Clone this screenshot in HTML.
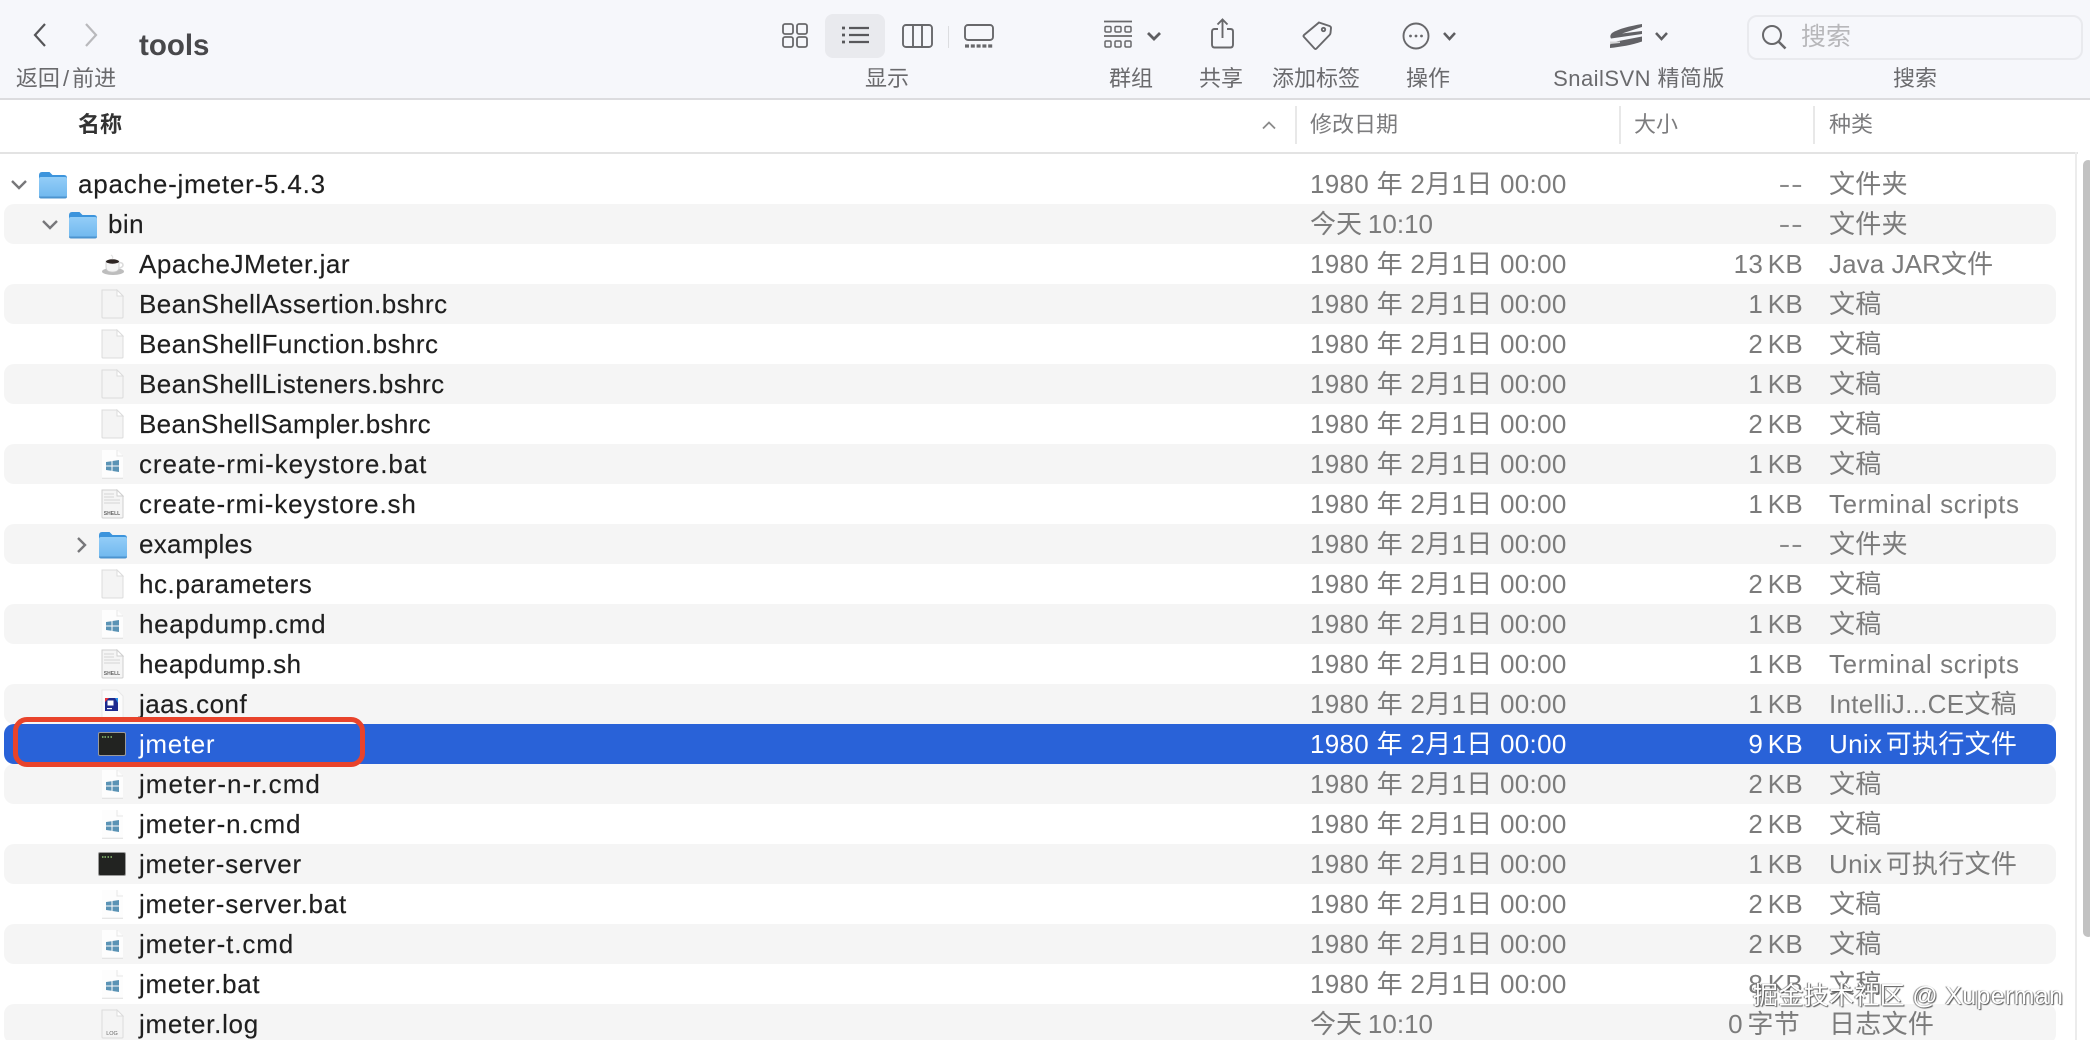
<!DOCTYPE html>
<html lang="zh"><head><meta charset="utf-8"><title>tools</title>
<style>
html,body{margin:0;padding:0;background:#fff}
#p{position:relative;width:2090px;height:1040px;overflow:hidden;background:#fff;font-family:"Liberation Sans","Noto Sans CJK SC",sans-serif;filter:blur(.3px)}
#tb{position:absolute;left:0;top:0;width:2090px;height:98px;background:#f6f7fb;border-bottom:2px solid #dcdcdf}
.l{position:absolute;top:65px;height:28px;line-height:28px;font-size:22px;color:#6a6a6d;transform:translateX(-50%);white-space:nowrap}
.h{position:absolute;top:109px;height:32px;line-height:32px;font-size:22px;color:#7c7c7e;white-space:nowrap}
.sep{position:absolute;top:106px;width:2px;height:38px;background:#e8e8e8}
.ic{position:absolute;overflow:visible}
.st{position:absolute;left:4px;width:2052px;height:40px;border-radius:10px;background:#f5f5f5}
.r{position:absolute;left:0;width:2060px;height:40px;line-height:40px;font-size:26px;white-space:nowrap}
.r span{position:absolute;top:0}
.n{color:#1f1f1f;letter-spacing:.45px;-webkit-text-stroke:.15px #1f1f1f}
.d{left:1310px;color:#7b7b7b;letter-spacing:.3px}
.s{right:257px;color:#7b7b7b;word-spacing:-3px;letter-spacing:.3px}
.dd{right:257px;letter-spacing:.5px;color:#8a8a8a;transform:scaleX(1.35);transform-origin:right center}
.dt{letter-spacing:0;word-spacing:-1.3px}
.t{word-spacing:-4px}
.k{left:1829px;color:#7b7b7b;letter-spacing:.3px}
.sel span{color:#fff;-webkit-text-stroke:0}
.r svg{position:absolute}
.mini{font-family:"Liberation Sans",sans-serif;font-weight:700}
</style></head><body><div id="p">

<svg width="0" height="0" style="position:absolute"><defs>
<linearGradient id="fg" x1="0" y1="0" x2="0" y2="1"><stop offset="0" stop-color="#93cdf7"/><stop offset="1" stop-color="#6fb7ee"/></linearGradient>
<symbol id="folder" viewBox="0 0 30 28"><path d="M1 4.500Q1 1 4 1h7.500l3 3H26q3 0 3 3v4H1z" fill="#3c94dc"/><rect x="1" y="6" width="28" height="21" rx="2" fill="url(#fg)"/><path d="M1 25.500h28V25.600q0 1.900-2 1.900H3q-2 0-2-1.900z" fill="#4c94cf"/></symbol>
<symbol id="doc" viewBox="0 0 24 30"><path d="M2 1h15l6 6v21q0 1-1 1H3q-1 0-1-1z" fill="#f4f4f4" stroke="#dcdcdc"/><path d="M17 1v6h6z" fill="#fff" stroke="#dcdcdc"/></symbol>
<symbol id="win" viewBox="0 0 24 30"><path d="M2 1h15l6 6v21q0 1-1 1H3q-1 0-1-1z" fill="#fdfdfd"/><path d="M2 29.300h21" stroke="#dedede"/><path d="M17 1v6h6" fill="none" stroke="#e6e6e6"/><path d="M6 13l5.500-.8v4.300H6zM12.500 12l6.500-1v5.500h-6.500zM6 17.500h5.500v4.300L6 21zM12.500 17.500H19V23l-6.500-1z" fill="#5a93b5"/></symbol>
<symbol id="shell" viewBox="0 0 24 30"><path d="M2 1h15l6 6v21q0 1-1 1H3q-1 0-1-1z" fill="#f5f5f5" stroke="#cfcfcf"/><path d="M17 1v6h6z" fill="#fff" stroke="#cfcfcf"/><path d="M4 5h10M4 8h10M4 11h16M4 14h16" stroke="#dcdcdc" stroke-width="1.300"/></symbol>
<symbol id="term" viewBox="0 0 28 24"><rect x=".5" y=".5" width="27" height="23" rx="1.500" fill="#222321" stroke="#9a9a9a"/><path d="M4 5h1.500M6.500 5H8M9.500 5H11M12.500 5H14" stroke="#8cc274" stroke-width="1.600"/></symbol>
</defs></svg>

<div id="tb"></div>
<!-- nav -->
<svg class="ic" style="left:32px;top:22px" width="16" height="26" viewBox="0 0 16 26"><path d="M13 2L3 13l10 11" fill="none" stroke="#555558" stroke-width="2.200"/></svg>
<svg class="ic" style="left:83px;top:22px" width="16" height="26" viewBox="0 0 16 26"><path d="M3 2l10 11L3 24" fill="none" stroke="#b9b9bc" stroke-width="2.200"/></svg>
<div style="position:absolute;left:139px;top:28px;height:36px;line-height:36px;font-size:29.500px;font-weight:700;color:#48484b">tools</div>
<div class="l" style="left:66px">返回<span style="margin:0 3px">/</span>前进</div>

<!-- view -->
<svg class="ic" style="left:782px;top:23px" width="26" height="25" viewBox="0 0 26 25" fill="none" stroke="#68686b" stroke-width="1.800"><rect x="1" y="1" width="10" height="10" rx="2"/><rect x="15" y="1" width="10" height="10" rx="2"/><rect x="1" y="14" width="10" height="10" rx="2"/><rect x="15" y="14" width="10" height="10" rx="2"/></svg>
<div style="position:absolute;left:825px;top:14px;width:60px;height:44px;border-radius:8px;background:#e9eaee"></div>
<svg class="ic" style="left:842px;top:25px" width="27" height="20" viewBox="0 0 27 20" fill="none" stroke="#58585b" stroke-width="2.200"><path d="M7 3h20M7 10h20M7 17h20"/><path d="M0 3h3M0 10h3M0 17h3" stroke-width="2.800"/></svg>
<svg class="ic" style="left:902px;top:24px" width="31" height="24" viewBox="0 0 31 24" fill="none" stroke="#68686b" stroke-width="1.900"><rect x="1" y="1" width="29" height="22" rx="3"/><path d="M11 1v22M20 1v22"/></svg>
<div style="position:absolute;left:948px;top:26px;width:1px;height:22px;background:#dcdde0"></div>
<svg class="ic" style="left:964px;top:24px" width="30" height="24" viewBox="0 0 30 24" fill="none" stroke="#68686b" stroke-width="1.900"><rect x="1" y="1" width="28" height="15" rx="3"/><path d="M1 22h28" stroke-width="3.200" stroke-dasharray="4 1.800"/></svg>
<div class="l" style="left:887px">显示</div>

<!-- group -->
<svg class="ic" style="left:1104px;top:20px" width="28" height="29" viewBox="0 0 28 29" fill="none" stroke="#68686b" stroke-width="1.500"><path d="M0 1.500h28M0 16h28" stroke-width="1.700"/><rect x="1" y="6.500" width="6" height="5.500" rx="1.200"/><rect x="11" y="6.500" width="6" height="5.500" rx="1.200"/><rect x="21" y="6.500" width="6" height="5.500" rx="1.200"/><rect x="1" y="21" width="6" height="6" rx="1.200"/><rect x="11" y="21" width="6" height="6" rx="1.200"/><rect x="21" y="21" width="6" height="6" rx="1.200"/></svg>
<svg class="ic" style="left:1146px;top:31px" width="16" height="11" viewBox="0 0 16 11"><path d="M2 2l6 6 6-6" fill="none" stroke="#5e5e61" stroke-width="2.800"/></svg>
<div class="l" style="left:1131px">群组</div>
<!-- share -->
<svg class="ic" style="left:1211px;top:18px" width="23" height="31" viewBox="0 0 23 31" fill="none" stroke="#68686b" stroke-width="1.900"><path d="M7 11H3.500Q1 11 1 13.500v13Q1 29.500 3.500 29.500h16q2.500 0 2.500-3v-13q0-2.500-2.500-2.500H16"/><path d="M11.500 20V2M6.500 6.500l5-5 5 5"/></svg>
<div class="l" style="left:1221px">共享</div>
<!-- tag -->
<svg class="ic" style="left:1302px;top:21px" width="31" height="30" viewBox="0 0 31 30" fill="none" stroke="#68686b" stroke-width="1.900"><path d="M17 1.500l10.500 3.500q1.500.5 1.500 2l-.5 5q-.1 1-1 2L14.500 27.500q-1 1-2 0L2 16q-1-1 0-2z"/><circle cx="21.500" cy="8.500" r="1.700"/></svg>
<div class="l" style="left:1316px">添加标签</div>
<!-- action -->
<svg class="ic" style="left:1402px;top:22px" width="28" height="28" viewBox="0 0 28 28" fill="none" stroke="#68686b" stroke-width="1.900"><circle cx="14" cy="14" r="12.500"/><circle cx="8.500" cy="14" r="1.400" fill="#68686b" stroke="none"/><circle cx="14" cy="14" r="1.400" fill="#68686b" stroke="none"/><circle cx="19.500" cy="14" r="1.400" fill="#68686b" stroke="none"/></svg>
<svg class="ic" style="left:1442px;top:31px" width="15" height="11" viewBox="0 0 15 11"><path d="M2 2l5.500 6L13 2" fill="none" stroke="#5e5e61" stroke-width="2.500"/></svg>
<div class="l" style="left:1428px">操作</div>
<!-- svn -->
<svg class="ic" style="left:1610px;top:23px" width="33" height="26" viewBox="0 0 33 26"><path d="M32 1C20 3 8 6 2 10 0 12 0 14 1 15.500L32 11V8L12 10.500 32 4z" fill="#626266"/><path d="M1 19.500L32 13.500V18.500C22 22 10 24 0 25V22z" fill="#626266"/><path d="M0 18.500h10v1.500l-10 1z" fill="#d6d6d8"/></svg>
<svg class="ic" style="left:1654px;top:31px" width="15" height="11" viewBox="0 0 15 11"><path d="M2 2l5.500 6L13 2" fill="none" stroke="#5e5e61" stroke-width="2.500"/></svg>
<div class="l" style="left:1639px;letter-spacing:.45px">SnailSVN 精简版</div>
<!-- search -->
<div style="position:absolute;left:1747px;top:15px;width:332px;height:41px;border:2px solid #e9eaee;border-radius:10px"></div>
<svg class="ic" style="left:1761px;top:24px" width="27" height="27" viewBox="0 0 27 27" fill="none" stroke="#68686b" stroke-width="2"><circle cx="11" cy="11" r="9"/><path d="M17.500 17.500l7 7" stroke-width="2.600"/></svg>
<div style="position:absolute;left:1801px;top:21px;height:32px;line-height:32px;font-size:25px;color:#b7b7ba">搜索</div>
<div class="l" style="left:1915px">搜索</div>

<!-- header -->
<div class="h" style="left:78px;font-weight:700;color:#333">名称</div>
<svg class="ic" style="left:1261px;top:120px" width="16" height="10" viewBox="0 0 16 10"><path d="M2 8.500l6-6 6 6" fill="none" stroke="#8a8a8a" stroke-width="1.800"/></svg>
<div class="sep" style="left:1295px"></div><div class="h" style="left:1310px">修改日期</div>
<div class="sep" style="left:1619px"></div><div class="h" style="left:1634px">大小</div>
<div class="sep" style="left:1813px"></div><div class="h" style="left:1829px">种类</div>
<div style="position:absolute;left:0;top:152px;width:2078px;height:2px;background:#e3e3e3"></div>

<!-- stripes -->
<div class="st" style="top:204px"></div>
<div class="st" style="top:284px"></div>
<div class="st" style="top:364px"></div>
<div class="st" style="top:444px"></div>
<div class="st" style="top:524px"></div>
<div class="st" style="top:604px"></div>
<div class="st" style="top:684px"></div>
<div class="st" style="top:724px;background:#2962d8"></div>
<div class="st" style="top:764px"></div>
<div class="st" style="top:844px"></div>
<div class="st" style="top:924px"></div>
<div class="st" style="top:1004px"></div>

<!-- rows -->
<div class="r" style="top:164px"><svg style="left:9px;top:15px" width="20" height="12" viewBox="0 0 20 12"><path d="M3 2l7 7 7-7" fill="none" stroke="#77777a" stroke-width="2.400"/></svg><svg style="left:38px;top:7px" width="30" height="28"><use href="#folder"/></svg><span class="n" style="left:78px;letter-spacing:.8px">apache-jmeter-5.4.3</span><span class="d">1980 年 2月1日 00:00</span><span class="s dd">--</span><span class="k">文件夹</span></div>
<div class="r" style="top:204px"><svg style="left:40px;top:15px" width="20" height="12" viewBox="0 0 20 12"><path d="M3 2l7 7 7-7" fill="none" stroke="#77777a" stroke-width="2.400"/></svg><svg style="left:68px;top:7px" width="30" height="28"><use href="#folder"/></svg><span class="n" style="left:108px">bin</span><span class="d dt">今天 10:10</span><span class="s dd">--</span><span class="k">文件夹</span></div>
<div class="r" style="top:244px"><svg style="left:101px;top:10px" width="24" height="22" viewBox="0 0 24 22"><ellipse cx="12" cy="17.500" rx="11" ry="3.500" fill="#bdbdbd"/><path d="M5 7h13v6q0 5-6.500 5T5 13z" fill="#f4f4f4" stroke="#c9c9c9" stroke-width=".8"/><path d="M18 8.500q4 0 4 2.500t-5 3.500" fill="none" stroke="#dcdcdc" stroke-width="1.600"/><ellipse cx="11.500" cy="7.500" rx="6.500" ry="2.200" fill="#2c2422"/><path d="M10 1q3 2 1 4" fill="none" stroke="#e2e2e2" stroke-width="1.200"/></svg><span class="n" style="left:139px;letter-spacing:.55px">ApacheJMeter.jar</span><span class="d">1980 年 2月1日 00:00</span><span class="s">13 KB</span><span class="k" style="letter-spacing:.1px">Java JAR文件</span></div>
<div class="r" style="top:284px"><svg style="left:100px;top:5px" width="24" height="30"><use href="#doc"/></svg><span class="n" style="left:139px">BeanShellAssertion.bshrc</span><span class="d">1980 年 2月1日 00:00</span><span class="s">1 KB</span><span class="k">文稿</span></div>
<div class="r" style="top:324px"><svg style="left:100px;top:5px" width="24" height="30"><use href="#doc"/></svg><span class="n" style="left:139px">BeanShellFunction.bshrc</span><span class="d">1980 年 2月1日 00:00</span><span class="s">2 KB</span><span class="k">文稿</span></div>
<div class="r" style="top:364px"><svg style="left:100px;top:5px" width="24" height="30"><use href="#doc"/></svg><span class="n" style="left:139px">BeanShellListeners.bshrc</span><span class="d">1980 年 2月1日 00:00</span><span class="s">1 KB</span><span class="k">文稿</span></div>
<div class="r" style="top:404px"><svg style="left:100px;top:5px" width="24" height="30"><use href="#doc"/></svg><span class="n" style="left:139px;letter-spacing:.33px">BeanShellSampler.bshrc</span><span class="d">1980 年 2月1日 00:00</span><span class="s">2 KB</span><span class="k">文稿</span></div>
<div class="r" style="top:444px"><svg style="left:100px;top:5px" width="24" height="30"><use href="#win"/></svg><span class="n" style="left:139px;letter-spacing:.91px">create-rmi-keystore.bat</span><span class="d">1980 年 2月1日 00:00</span><span class="s">1 KB</span><span class="k">文稿</span></div>
<div class="r" style="top:484px"><svg style="left:100px;top:5px" width="24" height="30"><use href="#shell"/><text x="12" y="26" text-anchor="middle" font-size="5" class="mini" fill="#666">SHELL</text></svg><span class="n" style="left:139px;letter-spacing:.87px">create-rmi-keystore.sh</span><span class="d">1980 年 2月1日 00:00</span><span class="s">1 KB</span><span class="k" style="letter-spacing:.63px">Terminal scripts</span></div>
<div class="r" style="top:524px"><svg style="left:76px;top:12px" width="12" height="18" viewBox="0 0 12 18"><path d="M2 2l7 7-7 7" fill="none" stroke="#77777a" stroke-width="2.400"/></svg><svg style="left:98px;top:7px" width="30" height="28"><use href="#folder"/></svg><span class="n" style="left:139px;letter-spacing:.3px">examples</span><span class="d">1980 年 2月1日 00:00</span><span class="s dd">--</span><span class="k">文件夹</span></div>
<div class="r" style="top:564px"><svg style="left:100px;top:5px" width="24" height="30"><use href="#doc"/></svg><span class="n" style="left:139px;letter-spacing:.55px">hc.parameters</span><span class="d">1980 年 2月1日 00:00</span><span class="s">2 KB</span><span class="k">文稿</span></div>
<div class="r" style="top:604px"><svg style="left:100px;top:5px" width="24" height="30"><use href="#win"/></svg><span class="n" style="left:139px;letter-spacing:.67px">heapdump.cmd</span><span class="d">1980 年 2月1日 00:00</span><span class="s">1 KB</span><span class="k">文稿</span></div>
<div class="r" style="top:644px"><svg style="left:100px;top:5px" width="24" height="30"><use href="#shell"/><text x="12" y="26" text-anchor="middle" font-size="5" class="mini" fill="#666">SHELL</text></svg><span class="n" style="left:139px">heapdump.sh</span><span class="d">1980 年 2月1日 00:00</span><span class="s">1 KB</span><span class="k" style="letter-spacing:.63px">Terminal scripts</span></div>
<div class="r" style="top:684px"><svg style="left:100px;top:5px" width="24" height="30" viewBox="0 0 24 30"><path d="M2 1h15l6 6v21q0 1-1 1H3q-1 0-1-1z" fill="#fbfbfb" stroke="#e8e8e8"/><rect x="5" y="9" width="13" height="13" fill="#1d2a8f"/><path d="M5 9h4l-4 4z" fill="#e8333d"/><path d="M18 9v5l-3-5z" fill="#2b8fe6"/><rect x="7.500" y="11.500" width="6" height="5" fill="#fff"/><rect x="7" y="19" width="5" height="1.200" fill="#fff"/></svg><span class="n" style="left:139px">jaas.conf</span><span class="d">1980 年 2月1日 00:00</span><span class="s">1 KB</span><span class="k">IntelliJ...CE文稿</span></div>
<div class="r sel" style="top:724px"><svg style="left:98px;top:8px" width="28" height="24"><use href="#term"/></svg><span class="n" style="left:139px;letter-spacing:.65px">jmeter</span><span class="d">1980 年 2月1日 00:00</span><span class="s">9 KB</span><span class="k t">Unix 可执行文件</span></div>
<div class="r" style="top:764px"><svg style="left:100px;top:5px" width="24" height="30"><use href="#win"/></svg><span class="n" style="left:139px;letter-spacing:1.02px">jmeter-n-r.cmd</span><span class="d">1980 年 2月1日 00:00</span><span class="s">2 KB</span><span class="k">文稿</span></div>
<div class="r" style="top:804px"><svg style="left:100px;top:5px" width="24" height="30"><use href="#win"/></svg><span class="n" style="left:139px;letter-spacing:.89px">jmeter-n.cmd</span><span class="d">1980 年 2月1日 00:00</span><span class="s">2 KB</span><span class="k">文稿</span></div>
<div class="r" style="top:844px"><svg style="left:98px;top:8px" width="28" height="24"><use href="#term"/></svg><span class="n" style="left:139px;letter-spacing:.75px">jmeter-server</span><span class="d">1980 年 2月1日 00:00</span><span class="s">1 KB</span><span class="k t">Unix 可执行文件</span></div>
<div class="r" style="top:884px"><svg style="left:100px;top:5px" width="24" height="30"><use href="#win"/></svg><span class="n" style="left:139px;letter-spacing:.76px">jmeter-server.bat</span><span class="d">1980 年 2月1日 00:00</span><span class="s">2 KB</span><span class="k">文稿</span></div>
<div class="r" style="top:924px"><svg style="left:100px;top:5px" width="24" height="30"><use href="#win"/></svg><span class="n" style="left:139px;letter-spacing:.89px">jmeter-t.cmd</span><span class="d">1980 年 2月1日 00:00</span><span class="s">2 KB</span><span class="k">文稿</span></div>
<div class="r" style="top:964px"><svg style="left:100px;top:5px" width="24" height="30"><use href="#win"/></svg><span class="n" style="left:139px;letter-spacing:.72px">jmeter.bat</span><span class="d">1980 年 2月1日 00:00</span><span class="s">8 KB</span><span class="k">文稿</span></div>
<div class="r" style="top:1004px"><svg style="left:100px;top:5px" width="24" height="30"><use href="#doc"/><text x="12" y="26" text-anchor="middle" font-size="5.500" font-family="Liberation Sans,sans-serif" fill="#666">LOG</text></svg><span class="n" style="left:139px;letter-spacing:.72px">jmeter.log</span><span class="d dt">今天 10:10</span><span class="s" style="right:260px">0 字节</span><span class="k">日志文件</span></div>

<!-- scrollbar -->
<div style="position:absolute;left:2075px;top:152px;width:2px;height:888px;background:#ececec"></div>
<div style="position:absolute;left:2083px;top:160px;width:10px;height:777px;border-radius:5px;background:#c2c2c2"></div>

<!-- red annotation -->
<div style="position:absolute;left:13px;top:717px;width:342px;height:40px;border:5px solid #e8432b;border-radius:14px"></div>

<!-- watermark -->
<div style="position:absolute;left:1753px;top:979px;height:34px;line-height:34px;font-size:25px;color:#fff;white-space:nowrap;letter-spacing:.33px;text-shadow:1px 1px 1px #555,-1px 0 1px #777">掘金技术社区 @ Xuperman</div>
</div></body></html>
